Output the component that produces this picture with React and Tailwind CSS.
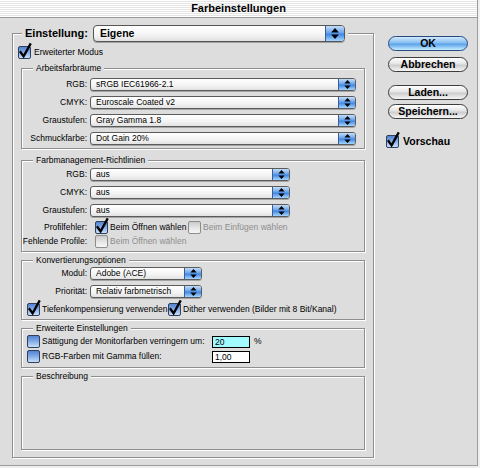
import React from 'react';

const UI = "font-['Liberation_Sans',Arial,sans-serif]";

// gemeinsame Verläufe für die Aqua-Checkboxen
function Defs() {
  return (
    <svg width="0" height="0" className="absolute">
      <defs>
        <linearGradient id="cbBlue" x1="0" y1="0" x2="0" y2="1">
          <stop offset="0" stopColor="#4f7fcf" />
          <stop offset="0.45" stopColor="#7ea8e6" />
          <stop offset="1" stopColor="#cde4fb" />
        </linearGradient>
        <linearGradient id="cbGray" x1="0" y1="0" x2="0" y2="1">
          <stop offset="0" stopColor="#c8c8c8" />
          <stop offset="0.5" stopColor="#e4e4e4" />
          <stop offset="1" stopColor="#f8f8f8" />
        </linearGradient>
      </defs>
    </svg>
  );
}

function CheckBox({ checked = false, disabled = false }) {
  return (
    <svg width="13" height="13" viewBox="0 0 13 13" className="shrink-0 overflow-visible">
      <rect
        x="0.5"
        y="0.5"
        width="12"
        height="12"
        rx="1.5"
        fill={disabled ? 'url(#cbGray)' : 'url(#cbBlue)'}
        stroke={disabled ? '#8c8c8c' : '#2f3f5c'}
      />
      {checked && (
        <path
          d="M2.6 6.2 L5.6 10.4 L12.2 -1.6"
          stroke="#000"
          strokeWidth="2.3"
          strokeLinecap="square"
          fill="none"
        />
      )}
    </svg>
  );
}

function Arrows({ big }) {
  return (
    <svg width={big ? 8 : 7} height={big ? 11 : 9} viewBox="0 0 7 10">
      <path d="M3.5 0 L7 4 H0 Z M0 6 H7 L3.5 10 Z" fill="#000" />
    </svg>
  );
}

function Popup({ w, children }) {
  return (
    <div
      className="flex h-[13px] shrink-0 rounded-[3px] border border-[#5b5b5b] bg-[linear-gradient(to_bottom,#ffffff,#f3f3f3_60%,#e2e2e2)] shadow-[0_1px_0_#a4a4a4]"
      style={{ width: w }}
    >
      <div className="flex-1 pl-[5px] text-[8.5px] leading-[11px] text-black whitespace-nowrap">{children}</div>
      <div className="flex w-[17px] items-center justify-center rounded-r-[2px] border-l border-[#3c5d94] bg-[linear-gradient(to_bottom,#c4def9,#6aa4ec_45%,#3f86e4_55%,#a6d6ff)]">
        <Arrows />
      </div>
    </div>
  );
}

function AquaButton({ children, primary }) {
  return (
    <div
      className={
        primary
          ? 'flex h-[15px] w-[80px] items-center justify-center rounded-full border border-[#28497e] bg-[linear-gradient(to_bottom,#d2eafd,#86bdf1_45%,#5ba2ea_55%,#c7eeff)] text-[10.5px] font-bold text-black'
          : 'flex h-[15px] w-[80px] items-center justify-center rounded-full border border-[#3c3c3c] bg-[linear-gradient(to_bottom,#ffffff,#e4e4e4_45%,#cdcdcd_55%,#f6f6f6)] text-[10.5px] font-bold text-black'
      }
    >
      {children}
    </div>
  );
}

function Group({ title, className = '', children }) {
  return (
    <fieldset
      className={`mx-[8px] border border-[#8e8e8e] p-0 shadow-[inset_1px_1px_0_#ffffff,1px_1px_0_#ffffff] ${className}`}
    >
      <legend className="ml-[11px] h-[12px] bg-[#dddddd] px-[3px] text-[8.5px] leading-[12px] text-black">
        {title}
      </legend>
      {children}
    </fieldset>
  );
}

function Row({ label, children }) {
  return (
    <div className="flex h-[13px] items-center">
      <span className="w-[65px] shrink-0 text-right text-[8.5px] leading-[13px] text-black whitespace-nowrap">
        {label}
      </span>
      <div className="ml-[3px] flex items-center">{children}</div>
    </div>
  );
}

export default function App() {
  return (
    <div className={`h-[468px] w-[480px] bg-[#efefef] ${UI}`}>
      <Defs />
      <div className="flex h-[466px] w-[478px] flex-col border-r border-b border-[#9c9c9c] bg-[#dddddd]">
        {/* Titelleiste */}
        <div className="flex h-[18px] shrink-0 items-center justify-center border-b border-[#9a9a9a] bg-[repeating-linear-gradient(to_bottom,#ffffff_0px,#ffffff_1px,#e4e4e4_1px,#e4e4e4_2px)] text-[11px] font-bold text-black">
          Farbeinstellungen
        </div>

        <div className="flex">
          {/* Einstellung */}
          <fieldset className="mt-[7px] ml-[12px] w-[362px] border border-[#8e8e8e] p-0 pb-[7px] shadow-[inset_1px_1px_0_#ffffff,1px_1px_0_#ffffff]">
            <legend className="ml-[9px] bg-[#dddddd] px-[3px]">
              <div className="flex h-[17px] items-center">
                <span className="mr-[5px] text-[11px] font-bold text-black">Einstellung:</span>
                <div className="flex h-[17px] w-[252px] rounded-[4px] border border-[#555555] bg-[linear-gradient(to_bottom,#ffffff,#f4f4f4_60%,#e0e0e0)] shadow-[0_1px_0_#a0a0a0]">
                  <div className="flex-1 pl-[6px] text-[10.5px] font-bold leading-[15px] text-black">Eigene</div>
                  <div className="flex w-[19px] items-center justify-center rounded-r-[3px] border-l border-[#3c5d94] bg-[linear-gradient(to_bottom,#c4def9,#6aa4ec_45%,#3f86e4_55%,#a6d6ff)]">
                    <Arrows big />
                  </div>
                </div>
              </div>
            </legend>

            <div className="mt-[4px] ml-[5px] flex h-[13px] items-center">
              <CheckBox checked />
              <span className="ml-[3px] text-[8.5px] text-black">Erweiterter Modus</span>
            </div>

            <Group title="Arbeitsfarbräume" className="mt-[3px]">
              <div className="flex flex-col gap-[5px] pt-[4px] pb-[3px]">
                <Row label="RGB:"><Popup w={266}>sRGB IEC61966-2.1</Popup></Row>
                <Row label="CMYK:"><Popup w={266}>Euroscale Coated v2</Popup></Row>
                <Row label="Graustufen:"><Popup w={266}>Gray Gamma 1.8</Popup></Row>
                <Row label="Schmuckfarbe:"><Popup w={266}>Dot Gain 20%</Popup></Row>
              </div>
            </Group>

            <Group title="Farbmanagement-Richtlinien" className="mt-[5px]">
              <div className="flex flex-col pt-[2px] pb-[3px]">
                <div className="flex flex-col gap-[5px]">
                  <Row label="RGB:"><Popup w={200}>aus</Popup></Row>
                  <Row label="CMYK:"><Popup w={200}>aus</Popup></Row>
                  <Row label="Graustufen:"><Popup w={200}>aus</Popup></Row>
                </div>
                <div className="mt-[4px]">
                  <Row label="Profilfehler:">
                    <div className="ml-[5px] flex w-[93px] items-center">
                      <CheckBox checked />
                      <span className="ml-[2px] text-[8.5px] whitespace-nowrap text-black">Beim Öffnen wählen</span>
                    </div>
                    <CheckBox disabled />
                    <span className="ml-[2px] text-[8.5px] whitespace-nowrap text-[#8d8d8d]">Beim Einfügen wählen</span>
                  </Row>
                </div>
                <div className="mt-[1px]">
                  <Row label="Fehlende Profile:">
                    <div className="ml-[5px] flex items-center">
                      <CheckBox disabled />
                      <span className="ml-[2px] text-[8.5px] whitespace-nowrap text-[#8d8d8d]">Beim Öffnen wählen</span>
                    </div>
                  </Row>
                </div>
              </div>
            </Group>

            <Group title="Konvertierungsoptionen" className="mt-[2px]">
              <div className="flex flex-col gap-[5px] pt-[1px] pb-[3px]">
                <Row label="Modul:"><Popup w={112}>Adobe (ACE)</Popup></Row>
                <Row label="Priorität:"><Popup w={112}>Relativ farbmetrisch</Popup></Row>
                <div className="ml-[5px] flex h-[13px] items-center">
                  <div className="flex w-[141px] items-center">
                    <CheckBox checked />
                    <span className="ml-[2px] text-[8.5px] whitespace-nowrap text-black">Tiefenkompensierung verwenden</span>
                  </div>
                  <CheckBox checked />
                  <span className="ml-[2px] text-[8.5px] whitespace-nowrap text-black">
                    Dither verwenden (Bilder mit 8 Bit/Kanal)
                  </span>
                </div>
              </div>
            </Group>

            <Group title="Erweiterte Einstellungen" className="mt-[2px]">
              <div className="flex flex-col gap-[2px] pt-[1px] pb-[4px]">
                <div className="ml-[5px] flex h-[13px] items-center">
                  <CheckBox />
                  <span className="ml-[2px] w-[170px] text-[8.5px] whitespace-nowrap text-black">
                    Sättigung der Monitorfarben verringern um:
                  </span>
                  <div className="h-[12px] w-[38px] border border-black bg-[#a2fbff] pl-[2px] text-[8.5px] leading-[10px] text-black">
                    20
                  </div>
                  <span className="ml-[4px] text-[8.5px] text-black">%</span>
                </div>
                <div className="ml-[5px] flex h-[13px] items-center">
                  <CheckBox />
                  <span className="ml-[2px] w-[170px] text-[8.5px] whitespace-nowrap text-black">
                    RGB-Farben mit Gamma füllen:
                  </span>
                  <div className="h-[12px] w-[38px] border border-black bg-white pl-[2px] text-[8.5px] leading-[10px] text-black">
                    1,00
                  </div>
                </div>
              </div>
            </Group>

            <Group title="Beschreibung" className="mt-[2px]">
              <div className="h-[67px]" />
            </Group>
          </fieldset>

          {/* Schaltflächen rechts */}
          <div className="mt-[18px] ml-[14px] flex flex-col">
            <AquaButton primary>OK</AquaButton>
            <div className="mt-[6px]">
              <AquaButton>Abbrechen</AquaButton>
            </div>
            <div className="mt-[13px]">
              <AquaButton>Laden...</AquaButton>
            </div>
            <div className="mt-[4px]">
              <AquaButton>Speichern...</AquaButton>
            </div>
            <div className="mt-[16px] ml-[-2px] flex h-[13px] items-center">
              <CheckBox checked />
              <span className="ml-[4px] text-[10.5px] font-bold text-black">Vorschau</span>
            </div>
          </div>
        </div>
      </div>
    </div>
  );
}
